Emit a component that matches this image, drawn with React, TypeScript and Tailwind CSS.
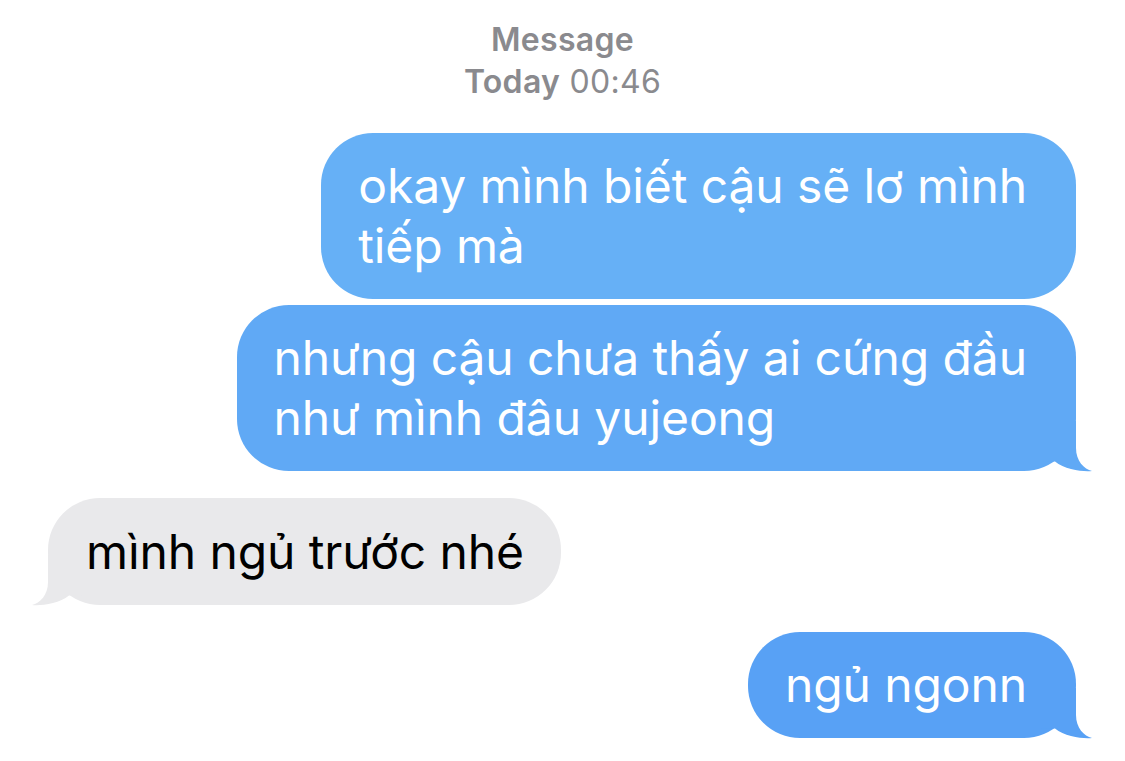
import React from 'react';

const Tail: React.FC<{ color: string; side: 'left' | 'right' }> = ({ color, side }) => (
  <svg
    width="52"
    height="50"
    viewBox="0 0 52 50"
    className={`absolute bottom-0 overflow-visible ${side === 'right' ? 'right-[-16px]' : 'left-[-16px] -scale-x-100'}`}
  >
    <path d="M0 0 H36 V27 C36 40 44 48 52 50 C44 51 25 49 15 40.5 L0 40 Z" fill={color} />
  </svg>
);

const Sent: React.FC<{ color: string; tail?: boolean; children: React.ReactNode }> = ({ color, tail, children }) => (
  <div className="flex justify-end pr-[49px]">
    <div className="relative rounded-[52px] pl-[37px] pr-[49px] py-[23px] text-white whitespace-nowrap" style={{ backgroundColor: color }}>
      {children}
      {tail && <Tail color={color} side="right" />}
    </div>
  </div>
);

export default function App() {
  return (
    <div className="w-[1125px] h-[761px] bg-white overflow-hidden font-['Inter',sans-serif] text-[48px] leading-[60px] tracking-[-0.1px]">
      <div className="pt-[19px] text-center text-[#8a8a8e] text-[32px] leading-[42px] tracking-[0.3px]">
        <div className="font-semibold">Message</div>
        <div>
          <span className="font-semibold">Today</span> 00:46
        </div>
      </div>

      <div className="mt-[30px] flex flex-col">
        <Sent color="#66b0f6">
          okay mình biết cậu sẽ lơ mình
          <br />
          tiếp mà
        </Sent>
        <div className="h-[6px]" />
        <Sent color="#60a9f5" tail>
          nhưng cậu chưa thấy ai cứng đầu
          <br />
          như mình đâu yujeong
        </Sent>

        <div className="mt-[27px] flex justify-start pl-[48px]">
          <div className="relative rounded-[52px] bg-[#e9e9eb] pl-[38px] pr-[37px] py-[23.5px] text-black whitespace-nowrap">
            mình ngủ trước nhé
            <Tail color="#e9e9eb" side="left" />
          </div>
        </div>

        <div className="h-[27px]" />
        <Sent color="#58a1f5" tail>
          ngủ ngonn
        </Sent>
      </div>
    </div>
  );
}
